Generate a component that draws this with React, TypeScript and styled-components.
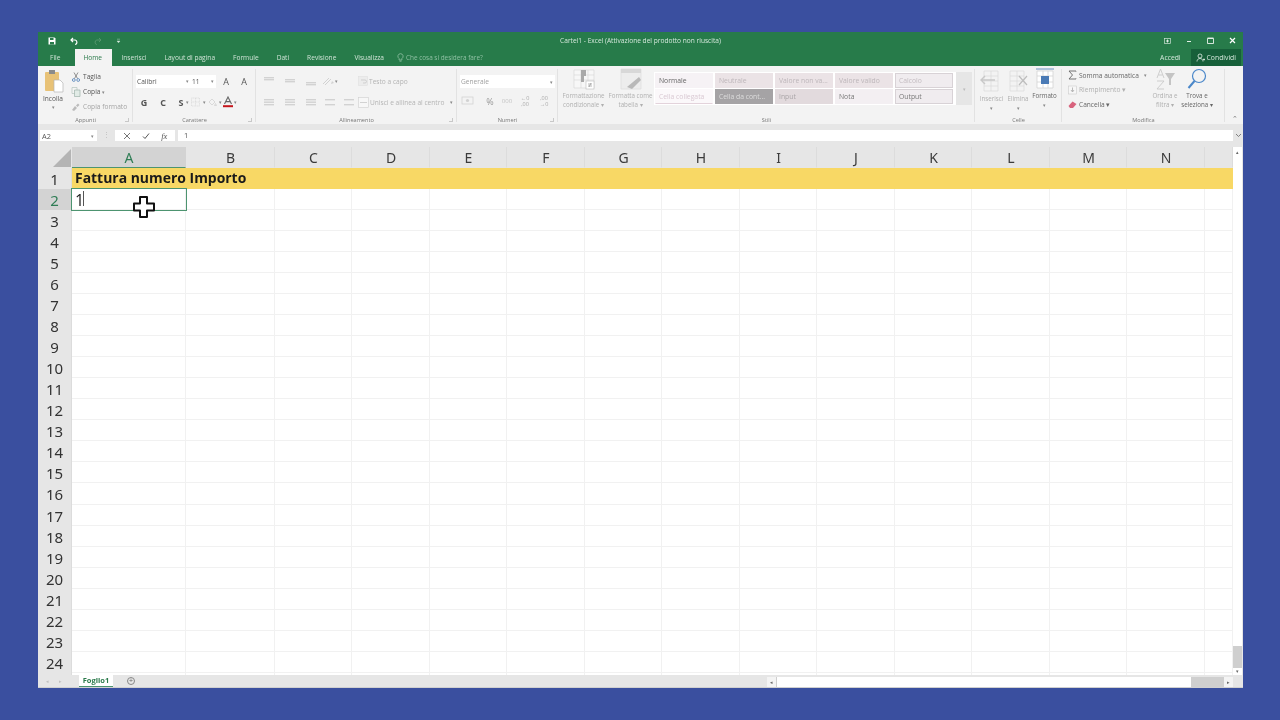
import React from "react";
import styled, { createGlobalStyle } from "styled-components";

const GlobalStyle = createGlobalStyle`
  html, body { margin: 0; padding: 0; background: #3a4f9f; }
  * { box-sizing: border-box; }
`;

const UI_FONT = `"Open Sans", "Noto Sans", sans-serif`;

const Page = styled.div`
  width: 1280px;
  height: 720px;
  padding: 32px 37px 32px 38px;
  background: #3a4f9f;
  font-family: ${UI_FONT};
  overflow: hidden;
`;
const Win = styled.div`
  width: 1205px;
  height: 656px;
  display: flex;
  flex-direction: column;
  background: #e6e6e6;
  filter: blur(0.35px);
`;

/* title bar */
const TitleBar = styled.div`
  height: 17px;
  background: #277b4a;
  display: grid;
  grid-template-columns: 1fr auto 1fr;
  align-items: center;
  color: #fff;
  font-size: 6.6px;
`;
const Quick = styled.div`
  display: flex;
  align-items: center;
  gap: 14px;
  padding-left: 10px;
`;
const WinButtons = styled.div`
  display: flex;
  justify-content: flex-end;
  align-items: center;
  gap: 15px;
  padding-right: 7px;
`;
const TitleText = styled.span`
  color: #d5e8dc;
`;

/* tabs */
const TabRow = styled.div`
  height: 17px;
  background: #277b4a;
  display: flex;
  align-items: stretch;
  padding-left: 12px;
`;
const Tab = styled.div<{ $active?: boolean; $gap?: number }>`
  display: flex;
  align-items: center;
  font-size: 6.6px;
  margin-left: ${(p) => p.$gap ?? 18}px;
  padding: ${(p) => (p.$active ? "0 8px" : "0")};
  color: ${(p) => (p.$active ? "#2b7a4b" : "#cfe3d6")};
  background: ${(p) => (p.$active ? "#f3f3f3" : "transparent")};
  width: ${(p) => (p.$active ? "37px" : "auto")};
`;
const TellMe = styled.div`
  display: flex;
  align-items: center;
  gap: 2px;
  font-size: 6.4px;
  margin-left: 13px;
  color: #8fc0a3;
`;
const TabRight = styled.div`
  margin-left: auto;
  display: flex;
  align-items: stretch;
  font-size: 6.8px;
  color: #d5e8dc;
  padding-right: 2px;
`;
const Accedi = styled.div`
  display: flex;
  align-items: center;
  margin-right: 10px;
`;
const Share = styled.div`
  display: flex;
  align-items: center;
  gap: 2px;
  padding: 0 5px;
  background: #17603a;
`;

/* ribbon */
const Ribbon = styled.div`
  height: 58px;
  background: #f3f3f3;
  display: flex;
  position: relative;
`;
const Group = styled.div<{ $w: number }>`
  width: ${(p) => p.$w}px;
  display: flex;
  flex-direction: column;
  position: relative;
  &::after {
    content: "";
    position: absolute;
    right: 0;
    top: 3px;
    bottom: 2px;
    width: 1px;
    background: #e2e2e2;
  }
`;
const GroupBody = styled.div<{ $pad?: string }>`
  flex: 1;
  display: flex;
  padding: ${(p) => p.$pad ?? "0"};
  min-height: 0;
`;
const GroupLabel = styled.div`
  height: 8px;
  font-size: 5.6px;
  line-height: 8px;
  color: #777;
  text-align: center;
`;
const Launcher = styled.span`
  position: absolute;
  right: 4px;
  bottom: 2px;
  width: 4px;
  height: 4px;
  border-right: 1px solid #c8c8c8;
  border-bottom: 1px solid #c8c8c8;
`;
const Collapse = styled.span`
  position: absolute;
  right: 5px;
  bottom: 2px;
  font-size: 7px;
  line-height: 7px;
  color: #777;
`;

const Paste = styled.div`
  width: 32px;
  display: flex;
  flex-direction: column;
  align-items: center;
  padding-top: 3px;
  padding-right: 2px;
  font-size: 6.6px;
  color: #555;
  line-height: 9px;
`;
const ClipList = styled.div`
  margin-left: 1px;
  padding-top: 5px;
  display: flex;
  flex-direction: column;
  gap: 4px;
`;
const ClipItem = styled.div<{ $faded?: boolean }>`
  height: 11px;
  display: flex;
  align-items: center;
  gap: 2px;
  font-size: 6.6px;
  white-space: nowrap;
  color: ${(p) => (p.$faded ? "#a5a5a5" : "#555")};
`;

const Rows = styled.div<{ $gap?: number; $pt?: number }>`
  display: flex;
  flex-direction: column;
  gap: ${(p) => p.$gap ?? 7}px;
  padding-top: ${(p) => p.$pt ?? 8}px;
  width: 100%;
`;
const IconRow = styled.div<{ $gap?: number; $ml?: number }>`
  display: flex;
  align-items: center;
  height: 14px;
  gap: ${(p) => p.$gap ?? 0}px;
  margin-left: ${(p) => p.$ml ?? 0}px;
  white-space: nowrap;
`;
const Select = styled.div<{ $w: number; $faded?: boolean }>`
  width: ${(p) => p.$w}px;
  height: 13px;
  background: #fff;
  display: flex;
  align-items: center;
  justify-content: space-between;
  padding: 0 2px 0 1px;
  font-size: 6.6px;
  color: ${(p) => (p.$faded ? "#a0a0a0" : "#555")};
`;
const Caret = styled.span`
  font-size: 5px;
  color: #888;
`;
const BigLetter = styled.span<{ $w: number; $color?: string; $ml?: number }>`
  width: ${(p) => p.$w}px;
  margin-left: ${(p) => p.$ml ?? 0}px;
  text-align: center;
  font-size: 9px;
  font-weight: 700;
  color: ${(p) => p.$color ?? "#555"};
`;
const SmallLetter = styled(BigLetter)`
  font-weight: 400;
`;
const TinyDigits = styled(SmallLetter)`
  font-size: 5.5px;
  line-height: 6px;
`;
const Thousands = styled(SmallLetter)`
  font-size: 6px;
`;
const FadedText = styled.span<{ $ml?: number }>`
  font-size: 6.6px;
  color: #b4b4b4;
  margin-left: ${(p) => p.$ml ?? 2}px;
`;
const Spacer = styled.span<{ $w: number }>`
  width: ${(p) => p.$w}px;
  flex: none;
`;

const Big = styled.div<{ $w: number; $faded?: boolean }>`
  width: ${(p) => p.$w}px;
  display: flex;
  flex-direction: column;
  align-items: center;
  font-size: 6.2px;
  line-height: 8.5px;
  text-align: center;
  white-space: nowrap;
  color: ${(p) => (p.$faded ? "#b0b0b0" : "#666")};
`;
const BigIcon = styled.div<{ $h: number }>`
  height: ${(p) => p.$h}px;
  display: flex;
  align-items: center;
  justify-content: center;
  flex: none;
`;

const Gallery = styled.div`
  margin-top: 6px;
  width: 302px;
  height: 33px;
  background: #fff;
  display: grid;
  grid-template-columns: repeat(5, 57.5px);
  grid-auto-rows: 15px;
  column-gap: 2.5px;
  row-gap: 1px;
  padding: 1px 1px;
`;
const GalleryScroll = styled.div`
  margin-top: 6px;
  width: 16px;
  height: 33px;
  background: #e6e6e6;
  display: flex;
  align-items: center;
  justify-content: center;
  font-size: 5px;
  color: #bbb;
`;
type StyleKind = "plain" | "pink" | "link" | "check" | "input" | "note" | "output" | "calc";
const galleryBg: Record<StyleKind, string> = {
  plain: "#f6f2f5",
  pink: "#ebe3e6",
  link: "#fbf8fa",
  check: "#a5a3a5",
  input: "#e2dadd",
  note: "#f3eff2",
  output: "#f0ecef",
  calc: "#f0ecef",
};
const galleryFg: Record<StyleKind, string> = {
  plain: "#666",
  pink: "#bdb6ba",
  link: "#d9c8d2",
  check: "#ddd",
  input: "#aaa5a8",
  note: "#777",
  output: "#777",
  calc: "#c4bcc1",
};
const StyleCell = styled.div<{ $kind: StyleKind }>`
  background: ${(p) => galleryBg[p.$kind]};
  color: ${(p) => galleryFg[p.$kind]};
  font-size: 6.8px;
  line-height: 13px;
  padding-left: 3px;
  white-space: nowrap;
  overflow: hidden;
  border: ${(p) =>
    p.$kind === "output" || p.$kind === "calc" ? "1px solid #d8d2d6" : "1px solid transparent"};
  border-bottom-color: ${(p) => (p.$kind === "link" ? "#e3d3db" : undefined)};
`;

const EditCol = styled.div`
  width: 83px;
  padding-top: 3px;
  display: flex;
  flex-direction: column;
  gap: 2.5px;
`;
const EditItem = styled.div<{ $faded?: boolean }>`
  height: 12px;
  display: flex;
  align-items: center;
  gap: 2px;
  font-size: 6.6px;
  white-space: nowrap;
  color: ${(p) => (p.$faded ? "#b0b0b0" : "#666")};
`;

/* formula bar */
const FormulaBar = styled.div`
  height: 23px;
  padding: 6px 0 6px 2px;
  display: flex;
  align-items: stretch;
  background: #e6e6e6;
  font-size: 7.4px;
  color: #555;
`;
const NameBox = styled.div`
  width: 57px;
  background: #fff;
  display: flex;
  align-items: center;
  justify-content: space-between;
  padding: 0 3px 0 2px;
`;
const Dots = styled.div`
  width: 18px;
  text-align: center;
  line-height: 10px;
  color: #bbb;
  font-size: 7px;
`;
const FnBox = styled.div`
  width: 60px;
  background: #fff;
  display: flex;
  align-items: center;
  justify-content: space-around;
  padding: 0 2px;
`;
const FnMark = styled.span`
  font-family: "Liberation Serif", serif;
  font-style: italic;
  font-size: 8.5px;
`;
const FnInput = styled.div`
  margin-left: 3px;
  width: 1055px;
  background: #fff;
  padding-left: 6px;
  line-height: 11px;
`;
const BarChevron = styled.div`
  width: 10px;
  display: flex;
  align-items: center;
  justify-content: center;
`;

/* sheet */
const COLS = ["A", "B", "C", "D", "E", "F", "G", "H", "I", "J", "K", "L", "M", "N", ""];
const WIDTHS = [114, 89, 77, 78, 77, 78, 77, 78, 77, 78, 77, 78, 77, 78, 28];
const ROWS = Array.from({ length: 25 }, (_, i) => i + 1);

const SheetWrap = styled.div`
  height: 528px;
  display: flex;
  position: relative;
  overflow: hidden;
`;
const Grid = styled.div`
  width: 1195px;
  display: grid;
  grid-template-columns: 34px ${WIDTHS.map((w) => w + "px").join(" ")};
  grid-template-rows: 21px;
  grid-auto-rows: 21.04px;
  background: #fff;
`;
const Corner = styled.div`
  background: #e6e6e6;
  position: relative;
  overflow: hidden;
  &::after {
    content: "";
    position: absolute;
    right: 1px;
    bottom: 1px;
    border-style: solid;
    border-width: 0 0 18px 18px;
    border-color: transparent transparent #b4b4b4 transparent;
  }
`;
const ColHead = styled.div<{ $sel?: boolean }>`
  background: ${(p) => (p.$sel ? "#d3d3d3" : "#e6e6e6")};
  border-right: 1px solid ${(p) => (p.$sel ? "#d3d3d3" : "#dcdcdc")};
  border-bottom: 1px solid ${(p) => (p.$sel ? "#4d9470" : "#e6e6e6")};
  color: ${(p) => (p.$sel ? "#2f7d55" : "#3b3b3b")};
  font-family: "Noto Sans", sans-serif;
  font-size: 14px;
  line-height: 21px;
  text-align: center;
  padding-left: 1px;
`;
const RowHead = styled.div<{ $sel?: boolean }>`
  background: ${(p) => (p.$sel ? "#d3d3d3" : "#e6e6e6")};
  border-right: 1px solid ${(p) => (p.$sel ? "#4d9470" : "#dcdcdc")};
  color: ${(p) => (p.$sel ? "#2f7d55" : "#333")};
  font-family: "Noto Sans", sans-serif;
  font-size: 15px;
  line-height: 22px;
  text-align: center;
`;
const Cell = styled.div<{ $yellow?: boolean; $sel?: boolean }>`
  background: ${(p) => (p.$yellow ? "#f8d865" : "#fff")};
  border-right: 1px solid ${(p) => (p.$yellow ? "#f8d865" : "#f1f1f1")};
  border-bottom: 1px solid ${(p) => (p.$yellow ? "#f8d865" : "#f1f1f1")};
  outline: ${(p) => (p.$sel ? "1.5px solid #4d9470" : "none")};
  outline-offset: -0.5px;
  position: relative;
  z-index: ${(p) => (p.$sel ? 2 : "auto")};
  white-space: nowrap;
  font-family: "Open Sans", sans-serif;
  color: #1c1c1c;
  font-size: 16px;
  line-height: 23px;
  padding-left: 3px;
`;
const HeaderText = styled.span`
  font-weight: 700;
  font-size: 13.95px;
  position: relative;
  top: -2px;
  z-index: 1;
  color: #1a1a1a;
`;
const TextCaret = styled.span`
  position: absolute;
  left: 11px;
  top: 2px;
  bottom: 3px;
  width: 1px;
  background: #555;
`;
const CursorMark = styled.svg`
  position: absolute;
  left: 94px;
  top: 48px;
  z-index: 3;
`;
const VScroll = styled.div`
  width: 10px;
  background: #e6e6e6;
  display: flex;
  flex-direction: column;
`;
const ScrollBtn = styled.div<{ $h: number }>`
  height: ${(p) => p.$h}px;
  width: 9px;
  flex: none;
  background: #fff;
  color: #666;
  font-size: 5px;
  line-height: ${(p) => p.$h}px;
  text-align: center;
`;
const VTrack = styled.div`
  height: 489px;
  flex: none;
  width: 9px;
  background: #fff;
`;
const VThumb = styled.div`
  height: 22px;
  flex: none;
  width: 9px;
  background: #cfcfcf;
`;

/* bottom bar */
const BottomBar = styled.div`
  flex: 1;
  display: flex;
  align-items: stretch;
  background: #e6e6e6;
  border-bottom: 1px solid #d0d0d0;
`;
const SheetNav = styled.div`
  width: 41px;
  display: flex;
  align-items: center;
  gap: 10px;
  padding-left: 8px;
  font-size: 5px;
  color: #c0c0c0;
`;
const SheetTab = styled.div`
  width: 34px;
  height: 12px;
  background: #fff;
  border-bottom: 1px solid #4d9470;
  color: #2b7a4b;
  font-size: 7.5px;
  font-weight: 700;
  line-height: 11px;
  text-align: center;
`;
const AddSheet = styled.div`
  width: 8px;
  height: 8px;
  margin: 2px 0 0 14px;
  border: 1px solid #888;
  border-radius: 50%;
  color: #666;
  font-size: 7px;
  line-height: 6px;
  text-align: center;
`;
const HScroll = styled.div`
  margin-left: auto;
  width: 466px;
  height: 10px;
  margin-top: 2px;
  margin-right: 10px;
  display: flex;
  background: #cfcfcf;
  justify-content: space-between;
`;
const HBtn = styled.div`
  width: 9px;
  background: #f4f4f4;
  color: #666;
  font-size: 5px;
  line-height: 10px;
  text-align: center;
`;
const HThumb = styled.div`
  width: 414px;
  background: #fff;
  margin-right: 33px;
`;

const Faint = "#d2d2d2";

const LinesIcon = ({ rows, w = 10 }: { rows: number[]; w?: number }) => (
  <svg width={w + 6} height="12" viewBox={`0 0 ${w + 6} 12`}>
    {rows.map((y, i) => (
      <rect key={i} x="3" y={y} width={w} height="1.4" fill={Faint} />
    ))}
  </svg>
);

const CrossIcon = () => (
  <svg width="8" height="8" viewBox="0 0 8 8">
    <path d="M1 1l6 6M7 1L1 7" stroke="#666" strokeWidth="0.9" />
  </svg>
);
const TickIcon = () => (
  <svg width="8" height="8" viewBox="0 0 8 8">
    <path d="M1 4.5l2 2L7 1.5" stroke="#555" strokeWidth="1" fill="none" />
  </svg>
);

const CellsIcon = ({ children }: { children?: React.ReactNode }) => (
  <svg width="26" height="24" viewBox="0 0 26 24">
    <path d="M5 2h14v20H5zM5 7h14M5 12h14M5 17h14M12 2v20" fill="none" stroke="#dcdcdc" strokeWidth="0.8" />
    {children}
  </svg>
);

export default function App() {
  return (
    <Page>
      <GlobalStyle />
      <Win>
        <TitleBar>
          <Quick>
            <svg width="8" height="8" viewBox="0 0 8 8">
              <path d="M0.5 0.5h6l1 1v6h-7z" fill="#fff" />
              <rect x="2" y="1" width="3.5" height="2" fill="#277b4a" />
              <rect x="2" y="5" width="4" height="2.5" fill="#277b4a" />
            </svg>
            <svg width="9" height="8" viewBox="0 0 9 8">
              <path d="M3 1L1 3l2 2M1.2 3h4a2.4 2.4 0 010 4.6" fill="none" stroke="#fff" strokeWidth="1.2" />
            </svg>
            <svg width="9" height="8" viewBox="0 0 9 8">
              <path d="M6 1l2 2-2 2M7.8 3h-4a2.4 2.4 0 000 4.6" fill="none" stroke="#58986f" strokeWidth="0.9" />
            </svg>
            <svg width="5" height="6" viewBox="0 0 5 6">
              <path d="M1 1.2h3M1 3l1.5 1.8L4 3z" fill="#d5e8dc" stroke="#d5e8dc" strokeWidth="0.4" />
            </svg>
          </Quick>
          <TitleText>Cartel1 - Excel (Attivazione del prodotto non riuscita)</TitleText>
          <WinButtons>
            <svg width="7" height="6" viewBox="0 0 7 6">
              <rect x="0.5" y="0.5" width="6" height="5" fill="none" stroke="#cfe3d6" strokeWidth="0.7" />
              <path d="M3.5 1.5v3M2 3h3" stroke="#fff" strokeWidth="0.8" />
            </svg>
            <svg width="6" height="6" viewBox="0 0 6 6">
              <path d="M1 3.5h4" stroke="#e4f0e8" strokeWidth="1" />
            </svg>
            <svg width="7" height="7" viewBox="0 0 7 7">
              <path d="M0.5 1.5h6v5h-6zM0.5 1h6" fill="none" stroke="#fff" strokeWidth="0.8" />
            </svg>
            <svg width="7" height="7" viewBox="0 0 7 7">
              <path d="M1 1l5 5M6 1L1 6" stroke="#fff" strokeWidth="1.2" />
            </svg>
          </WinButtons>
        </TitleBar>

        <TabRow>
          <Tab $gap={0}>File</Tab>
          <Tab $active $gap={15}>Home</Tab>
          <Tab $gap={9}>Inserisci</Tab>
          <Tab>Layout di pagina</Tab>
          <Tab>Formule</Tab>
          <Tab>Dati</Tab>
          <Tab>Revisione</Tab>
          <Tab>Visualizza</Tab>
          <TellMe>
            <svg width="7" height="9" viewBox="0 0 7 9">
              <path d="M3.5 0.7a2.6 2.6 0 00-1.4 4.8V7h2.8V5.5A2.6 2.6 0 003.5 0.7zM2.5 8.2h2" fill="none" stroke="#9fcab0" strokeWidth="0.7" />
            </svg>
            Che cosa si desidera fare?
          </TellMe>
          <TabRight>
            <Accedi>Accedi</Accedi>
            <Share>
              <svg width="9" height="9" viewBox="0 0 9 9">
                <circle cx="4" cy="3" r="2" fill="none" stroke="#e4f0e8" strokeWidth="0.8" />
                <path d="M1 8.5c0-2 1.4-3 3-3s3 1 3 3M7 6.5h2M8 5.5v2" fill="none" stroke="#e4f0e8" strokeWidth="0.8" />
              </svg>
              Condividi
            </Share>
          </TabRight>
        </TabRow>

        <Ribbon>
          <Group $w={95}>
            <GroupBody>
              <Paste>
                <svg width="22" height="25" viewBox="0 0 22 25">
                  <rect x="3" y="3" width="14" height="19" rx="1" fill="#e8c277" />
                  <rect x="7" y="1" width="6" height="4" fill="#8b8b8b" />
                  <path d="M12 11h6l3 3v9h-9z" fill="#fff" stroke="#b5b5b5" strokeWidth="0.7" />
                </svg>
                <span>Incolla</span>
                <Caret>▾</Caret>
              </Paste>
              <ClipList>
                <ClipItem>
                  <svg width="10" height="10" viewBox="0 0 10 10">
                    <path d="M3 0.5l3.5 6M7 0.5L3.5 6.5" stroke="#666" strokeWidth="0.7" />
                    <circle cx="2.8" cy="8" r="1.4" fill="none" stroke="#4d7fb8" strokeWidth="0.8" />
                    <circle cx="7.2" cy="8" r="1.4" fill="none" stroke="#4d7fb8" strokeWidth="0.8" />
                  </svg>
                  Taglia
                </ClipItem>
                <ClipItem>
                  <svg width="10" height="10" viewBox="0 0 10 10">
                    <path d="M1 0.5h5v6H1z" fill="#f4f4f4" stroke="#b4c4bd" strokeWidth="0.7" />
                    <path d="M3.5 3h5.5v6.5H3.5z" fill="#e1ebe6" stroke="#9fb3aa" strokeWidth="0.7" />
                  </svg>
                  Copia <Caret>▾</Caret>
                </ClipItem>
                <ClipItem $faded>
                  <svg width="10" height="10" viewBox="0 0 10 10">
                    <path d="M1 8l3-4 2 2-3 3zM5 3.5l2-2 1.5 1.5-2 2z" fill="#bbb" />
                  </svg>
                  Copia formato
                </ClipItem>
              </ClipList>
            </GroupBody>
            <GroupLabel>Appunti</GroupLabel>
            <Launcher />
          </Group>

          <Group $w={123}>
            <GroupBody $pad="0 0 0 3px">
              <Rows>
                <IconRow>
                  <Select $w={55}>Calibri <Caret>▾</Caret></Select>
                  <Select $w={25}>11 <Caret>▾</Caret></Select>
                  <SmallLetter $w={12} $ml={4}>A</SmallLetter>
                  <SmallLetter $w={12} $ml={6}>A</SmallLetter>
                </IconRow>
                <IconRow>
                  <BigLetter $w={10} $ml={3}>G</BigLetter>
                  <BigLetter $w={10} $ml={9}>C</BigLetter>
                  <BigLetter $w={10} $ml={8}>S</BigLetter>
                  <Caret>▾</Caret>
                  <svg width="14" height="10" viewBox="0 0 14 10">
                    <path d="M2.5 1h8v8h-8zM6.5 1v8M2.5 5h8" fill="none" stroke={Faint} strokeWidth="0.6" strokeDasharray="1 0.6" />
                  </svg>
                  <Caret>▾</Caret>
                  <svg width="13" height="10" viewBox="0 0 13 10">
                    <path d="M3 5l3-3 3 3-3 3zM9.5 6.5l1 2h-2z" fill="none" stroke={Faint} strokeWidth="0.8" />
                  </svg>
                  <Caret>▾</Caret>
                  <svg width="12" height="12" viewBox="0 0 12 12">
                    <path d="M2.5 8L6 1l3.5 7M3.8 5.6h4.4" fill="none" stroke="#666" strokeWidth="1.1" />
                    <rect x="1" y="9.2" width="10" height="2" fill="#c4161c" />
                  </svg>
                  <Caret>▾</Caret>
                </IconRow>
              </Rows>
            </GroupBody>
            <GroupLabel>Carattere</GroupLabel>
            <Launcher />
          </Group>

          <Group $w={201}>
            <GroupBody $pad="0 0 0 5px">
              <Rows>
                <IconRow>
                  <LinesIcon rows={[2, 4]} />
                  <Spacer $w={5} />
                  <LinesIcon rows={[4, 6]} />
                  <Spacer $w={5} />
                  <LinesIcon rows={[7, 9]} />
                  <Spacer $w={2} />
                  <svg width="14" height="12" viewBox="0 0 14 12">
                    <path d="M2 9l6-6M4 10l6-6" stroke={Faint} strokeWidth="1" />
                    <path d="M10 9l3-1-2-2z" fill={Faint} />
                  </svg>
                  <Caret>▾</Caret>
                  <Spacer $w={20} />
                  <svg width="10" height="10" viewBox="0 0 10 10">
                    <rect x="0.5" y="0.5" width="9" height="9" fill="#ececec" stroke="#ddd" strokeWidth="0.5" />
                    <path d="M3 4h4a1.5 1.5 0 010 3H5" fill="none" stroke="#c4c4c4" strokeWidth="0.7" />
                  </svg>
                  <FadedText $ml={1}>Testo a capo</FadedText>
                </IconRow>
                <IconRow>
                  <LinesIcon rows={[3, 5.5, 8]} />
                  <Spacer $w={5} />
                  <LinesIcon rows={[3, 5.5, 8]} />
                  <Spacer $w={5} />
                  <LinesIcon rows={[3, 5.5, 8]} />
                  <Spacer $w={3} />
                  <LinesIcon rows={[3, 8]} />
                  <Spacer $w={3} />
                  <LinesIcon rows={[3, 8]} />
                  <Spacer $w={1} />
                  <svg width="11" height="11" viewBox="0 0 11 11">
                    <rect x="0.5" y="0.5" width="10" height="10" fill="#f7f7f7" stroke="#cfcfcf" strokeWidth="0.6" />
                    <path d="M2 5.5h7" stroke={Faint} strokeWidth="1" />
                  </svg>
                  <FadedText $ml={1}>Unisci e allinea al centro</FadedText>
                  <Spacer $w={6} />
                  <Caret>▾</Caret>
                </IconRow>
              </Rows>
            </GroupBody>
            <GroupLabel>Allineamento</GroupLabel>
            <Launcher />
          </Group>

          <Group $w={101}>
            <GroupBody $pad="0 0 0 3px">
              <Rows $pt={9} $gap={6}>
                <Select $w={95} $faded>Generale <Caret>▾</Caret></Select>
                <IconRow $ml={1} $gap={5}>
                  <svg width="13" height="10" viewBox="0 0 13 10">
                    <rect x="1" y="1" width="11" height="7" fill="none" stroke={Faint} strokeWidth="0.8" />
                    <circle cx="6.5" cy="4.5" r="1.6" fill={Faint} />
                  </svg>
                  <SmallLetter $w={12} $ml={5} $color="#999">%</SmallLetter>
                  <Thousands $w={12} $color="#c4c4c4">000</Thousands>
                  <TinyDigits $w={14} $color="#aaa">←0<br />,00</TinyDigits>
                  <TinyDigits $w={14} $color="#aaa">,00<br />→0</TinyDigits>
                </IconRow>
              </Rows>
            </GroupBody>
            <GroupLabel>Numeri</GroupLabel>
            <Launcher />
          </Group>

          <Group $w={417}>
            <GroupBody $pad="0 0 0 2px">
              <Big $w={47} $faded>
                <BigIcon $h={26}>
                  <svg width="24" height="24" viewBox="0 0 24 24">
                    <path d="M2 3h20v18H2zM2 8h20M2 13h20M9 3v18M16 3v18" fill="#f7f7f7" stroke="#d8d8d8" strokeWidth="0.7" />
                    <path d="M9 3h5v6h-5zM9 9h3v6H9z" fill="#a9a9a9" />
                    <rect x="14" y="14" width="8" height="8" fill="#fff" stroke="#bbb" strokeWidth="0.6" />
                    <path d="M16 17h4M16 19h4M19 16l-2 4" stroke="#888" strokeWidth="0.6" />
                  </svg>
                </BigIcon>
                <span>Formattazione</span>
                <span>condizionale ▾</span>
              </Big>
              <Big $w={47} $faded>
                <BigIcon $h={26}>
                  <svg width="24" height="24" viewBox="0 0 24 24">
                    <path d="M2 2h20v20H2z" fill="#ededed" stroke="#dcdcdc" strokeWidth="0.7" />
                    <path d="M2 2h20v4H2z" fill="#d8d8d8" />
                    <path d="M8 20l12-10 2 3-9 9z" fill="#b9b9b9" />
                  </svg>
                </BigIcon>
                <span>Formatta come</span>
                <span>tabella ▾</span>
              </Big>
              <Gallery>
                <StyleCell $kind="plain">Normale</StyleCell>
                <StyleCell $kind="pink">Neutrale</StyleCell>
                <StyleCell $kind="pink">Valore non va...</StyleCell>
                <StyleCell $kind="pink">Valore valido</StyleCell>
                <StyleCell $kind="calc">Calcolo</StyleCell>
                <StyleCell $kind="link">Cella collegata</StyleCell>
                <StyleCell $kind="check">Cella da cont...</StyleCell>
                <StyleCell $kind="input">Input</StyleCell>
                <StyleCell $kind="note">Nota</StyleCell>
                <StyleCell $kind="output">Output</StyleCell>
              </Gallery>
              <GalleryScroll>▾</GalleryScroll>
            </GroupBody>
            <GroupLabel>Stili</GroupLabel>
          </Group>

          <Group $w={87}>
            <GroupBody $pad="0 0 0 3px">
              <Big $w={27} $faded>
                <BigIcon $h={29}>
                  <CellsIcon>
                    <path d="M2 11h14M6 7l-4 4 4 4" fill="none" stroke="#c8c8c8" strokeWidth="1.4" />
                  </CellsIcon>
                </BigIcon>
                <span>Inserisci</span>
                <Caret>▾</Caret>
              </Big>
              <Big $w={26} $faded>
                <BigIcon $h={29}>
                  <CellsIcon>
                    <path d="M14 7l8 9M22 7l-8 9" stroke="#bdbdbd" strokeWidth="1.2" />
                  </CellsIcon>
                </BigIcon>
                <span>Elimina</span>
                <Caret>▾</Caret>
              </Big>
              <Big $w={27}>
                <BigIcon $h={26}>
                  <svg width="24" height="24" viewBox="0 0 24 24">
                    <path d="M4 4h16v17H4zM4 9h16M4 15h16M10 4v17M15 4v17" fill="#fff" stroke="#cfcfcf" strokeWidth="0.7" />
                    <rect x="8" y="9" width="8" height="8" fill="#4a7ab5" />
                    <path d="M3 2h18" stroke="#4a7ab5" strokeWidth="0.8" />
                  </svg>
                </BigIcon>
                <span>Formato</span>
                <Caret>▾</Caret>
              </Big>
            </GroupBody>
            <GroupLabel>Celle</GroupLabel>
          </Group>

          <Group $w={163}>
            <GroupBody $pad="0 0 0 6px">
              <EditCol>
                <EditItem>
                  <svg width="9" height="10" viewBox="0 0 9 10">
                    <path d="M8 1.5V1H1l3.5 4L1 9h7v-.5" fill="none" stroke="#666" strokeWidth="0.9" />
                  </svg>
                  Somma automatica <Spacer $w={1} /><Caret>▾</Caret>
                </EditItem>
                <EditItem $faded>
                  <svg width="9" height="10" viewBox="0 0 9 10">
                    <rect x="0.5" y="1" width="8" height="8" fill="#f7f7f7" stroke="#ccc" strokeWidth="0.6" />
                    <path d="M4.5 2.5v4M3 5l1.5 2L6 5" fill="none" stroke="#aaa" strokeWidth="0.8" />
                  </svg>
                  Riempimento ▾
                </EditItem>
                <EditItem>
                  <svg width="9" height="10" viewBox="0 0 9 10">
                    <path d="M0.5 7l4-4.5 4 2.5-3.5 4H2z" fill="#d8637d" />
                  </svg>
                  Cancella ▾
                </EditItem>
              </EditCol>
              <Big $w={28} $faded>
                <BigIcon $h={26}>
                  <svg width="22" height="24" viewBox="0 0 22 24">
                    <path d="M3 11L6.5 2 10 11M4.5 8h4M3 14h7l-7 8h7" fill="none" stroke="#c9c9c9" strokeWidth="0.9" />
                    <path d="M11 6h10l-4 6v6h-2v-6z" fill="#c4c4c4" />
                  </svg>
                </BigIcon>
                <span>Ordina e</span>
                <span>filtra ▾</span>
              </Big>
              <Big $w={36}>
                <BigIcon $h={26}>
                  <svg width="22" height="24" viewBox="0 0 22 24">
                    <circle cx="13" cy="9" r="6.5" fill="none" stroke="#4a87c9" strokeWidth="1.2" />
                    <path d="M8.5 14L2.5 21" stroke="#4a87c9" strokeWidth="2" />
                  </svg>
                </BigIcon>
                <span>Trova e</span>
                <span>seleziona ▾</span>
              </Big>
            </GroupBody>
            <GroupLabel>Modifica</GroupLabel>
          </Group>
          <Collapse>⌃</Collapse>
        </Ribbon>

        <FormulaBar>
          <NameBox>A2 <Caret>▾</Caret></NameBox>
          <Dots>⋮</Dots>
          <FnBox>
            <CrossIcon />
            <TickIcon />
            <FnMark>fx</FnMark>
          </FnBox>
          <FnInput>1</FnInput>
          <BarChevron>
            <svg width="7" height="5" viewBox="0 0 7 5">
              <path d="M1 1l2.5 2.5L6 1" fill="none" stroke="#666" strokeWidth="0.8" />
            </svg>
          </BarChevron>
        </FormulaBar>

        <SheetWrap>
          <Grid>
            <Corner />
            {COLS.map((c, i) => (
              <ColHead key={i} $sel={c === "A"}>{c}</ColHead>
            ))}
            {ROWS.map((r) => (
              <React.Fragment key={r}>
                <RowHead $sel={r === 2}>{r <= 24 ? r : ""}</RowHead>
                {COLS.map((c, i) => (
                  <Cell key={i} $yellow={r === 1} $sel={r === 2 && c === "A"}>
                    {r === 1 && c === "A" && <HeaderText>Fattura numero Importo</HeaderText>}
                    {r === 2 && c === "A" && (
                      <>
                        1
                        <TextCaret />
                      </>
                    )}
                  </Cell>
                ))}
              </React.Fragment>
            ))}
          </Grid>
          <VScroll>
            <ScrollBtn $h={10}>▴</ScrollBtn>
            <VTrack />
            <VThumb />
            <ScrollBtn $h={7}>▾</ScrollBtn>
          </VScroll>
          <CursorMark width="24" height="24" viewBox="0 0 24 24">
            <path
              d="M8 2h7v6.5h7v7h-7V22H8v-6.5H2v-7h6z"
              fill="#fff"
              stroke="#111"
              strokeWidth="2"
              strokeLinejoin="round"
            />
          </CursorMark>
        </SheetWrap>

        <BottomBar>
          <SheetNav>
            <span>◂</span>
            <span>▸</span>
          </SheetNav>
          <SheetTab>Foglio1</SheetTab>
          <AddSheet>+</AddSheet>
          <HScroll>
            <HBtn>◂</HBtn>
            <HThumb />
            <HBtn>▸</HBtn>
          </HScroll>
        </BottomBar>
      </Win>
    </Page>
  );
}
